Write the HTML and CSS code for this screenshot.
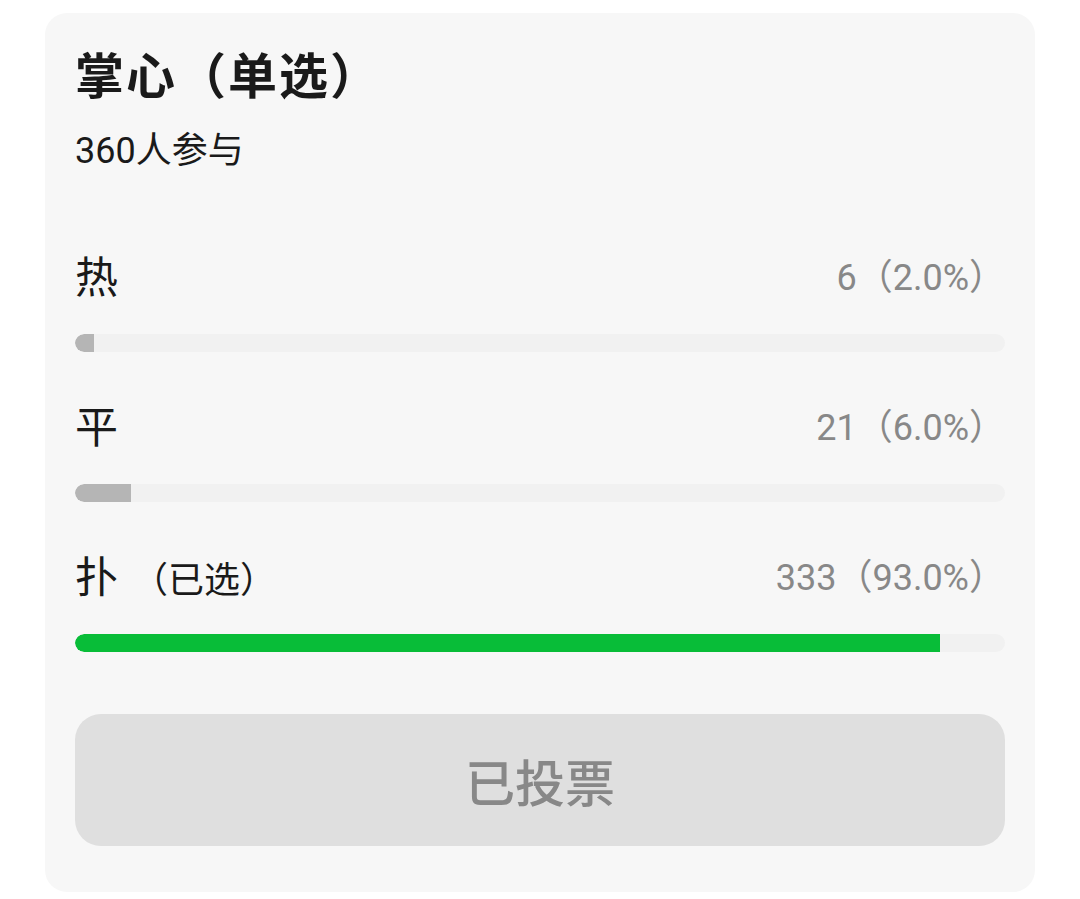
FILE: index.html
```html
<!DOCTYPE html>
<html lang="zh-CN">
<head>
  <meta charset="UTF-8" />
  <meta name="viewport" content="width=device-width, initial-scale=1" />
  <title>投票</title>
  <link rel="stylesheet" href="styles.css">
</head>
<body>
  <div class="vote-card">
    <h2 class="vote-title">掌心（单选）</h2>
    <div class="vote-count">360人参与</div>

    <div class="options">
      <div class="option">
        <div class="option-row">
          <span class="option-name">热</span>
          <span class="option-result">6（2.0%）</span>
        </div>
        <div class="bar"><div class="bar-fill" style="width: 2%"></div></div>
      </div>

      <div class="option">
        <div class="option-row">
          <span class="option-name">平</span>
          <span class="option-result">21（6.0%）</span>
        </div>
        <div class="bar"><div class="bar-fill" style="width: 6%"></div></div>
      </div>

      <div class="option selected">
        <div class="option-row">
          <span class="option-name">扑<span class="picked">（已选）</span></span>
          <span class="option-result">333（93.0%）</span>
        </div>
        <div class="bar"><div class="bar-fill" style="width: 93%"></div></div>
      </div>
    </div>

    <button class="vote-button" disabled>已投票</button>
  </div>
</body>
</html>
```

FILE: styles.css
```css
* {
  margin: 0;
  padding: 0;
  box-sizing: border-box;
  font-family: 'Roboto', 'Noto Sans CJK SC', sans-serif;
}

body {
  background: #fff;
  padding: 13px 45px 9px;
  color: #1a1a1a;
}

.vote-card {
  background: #f7f7f7;
  border-radius: 22px;
  padding: 34px 30px 46px;
  display: flex;
  flex-direction: column;
}

.vote-title {
  font-size: 49px;
  font-weight: bold;
  line-height: 62px;
  letter-spacing: 2px;
}

.vote-count {
  margin-top: 18px;
  font-size: 36px;
  line-height: 48px;
}

.options {
  margin-top: 69px;
  display: flex;
  flex-direction: column;
  gap: 42px;
}

.option-row {
  display: flex;
  justify-content: space-between;
  align-items: center;
  height: 60px;
}

.option-name {
  font-size: 43px;
}

.picked {
  font-size: 36px;
  margin-left: 14px;
}

.option-result {
  font-size: 36px;
  color: #888;
}

.bar {
  margin-top: 30px;
  height: 18px;
  background: #f1f1f1;
  border-radius: 9px;
  overflow: hidden;
}

.bar-fill {
  height: 100%;
  background: #b5b5b5;
  border-radius: 9px 0 0 9px;
}

.selected .bar-fill {
  background: #08bd38;
}

.vote-button {
  margin-top: 62px;
  height: 132px;
  border: none;
  border-radius: 26px;
  background: #dfdfdf;
  color: #888;
  font-size: 50px;
  font-weight: 500;
}
```
